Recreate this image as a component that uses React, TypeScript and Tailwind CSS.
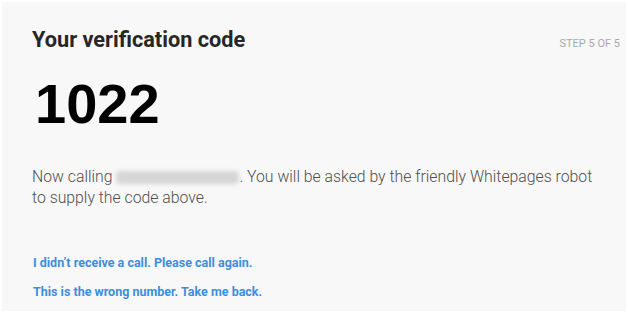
export default function App() {
  return (
    <div className="w-[628px] h-[317px] bg-white p-[2px]" style={{ fontFamily: "Roboto, 'Liberation Sans', sans-serif" }}>
      <div className="w-[624px] h-[309px] bg-[#f8f8f8]">
        <div className="flex items-start justify-between pl-[30px] pr-[6px] pt-[24px]">
          <h1 className="text-[21.7px] font-bold text-[#262626] leading-[28px]">Your verification code</h1>
          <span className="text-[11px] text-[#a8a8a8] mt-[10px]">STEP 5 OF 5</span>
        </div>
        <div
          className="pl-[33px] mt-[18px] text-[56px] font-bold text-black leading-[64px]"
          style={{ fontFamily: "'Liberation Sans', Arial, sans-serif" }}
        >
          1022
        </div>
        <p className="pl-[30px] pr-[18px] mt-[30px] text-[15.8px] font-light text-[#4f4f4f] leading-[21px]">
          Now calling{" "}
          <span className="inline-block w-[123px] h-[13px] align-middle bg-[#d6d6d6] blur-[2px] rounded-sm" />
          . You will be asked by the friendly Whitepages robot to supply the code above.
        </p>
        <div className="pl-[31px] mt-[46px] flex flex-col gap-[11px] text-[12.5px] font-bold text-[#3c8ee0] leading-[18px]">
          <a href="#">I didn’t receive a call. Please call again.</a>
          <a href="#">This is the wrong number. Take me back.</a>
        </div>
      </div>
    </div>
  );
}
